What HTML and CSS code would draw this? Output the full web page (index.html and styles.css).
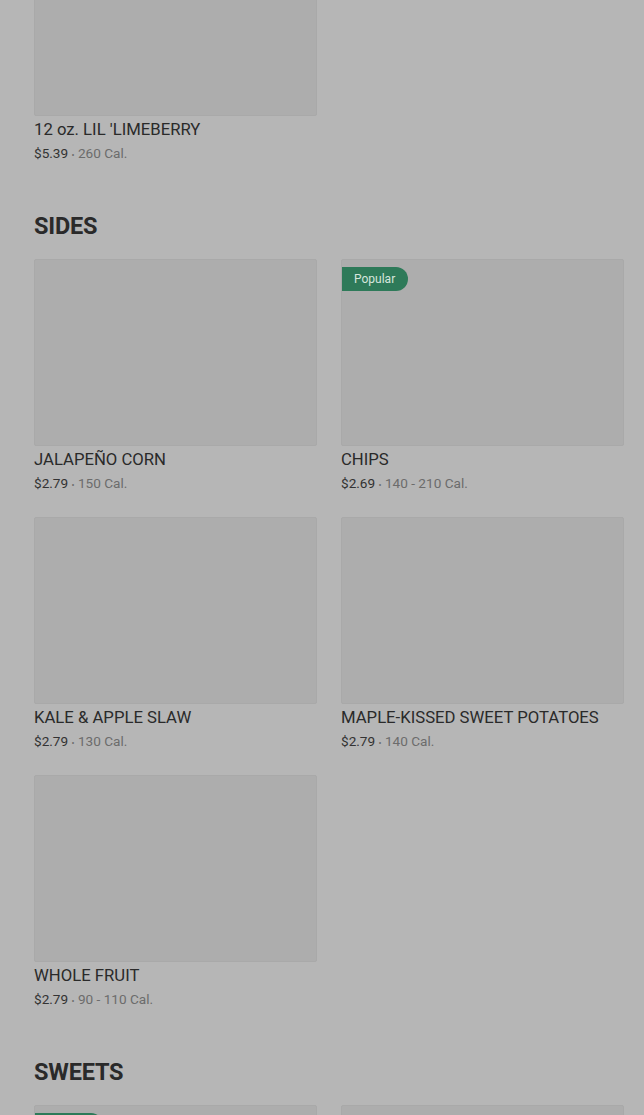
FILE: index.html
```html
<!DOCTYPE html>
<html lang="en">
<head>
<meta charset="UTF-8">
<meta name="viewport" content="width=device-width, initial-scale=1.0">
<title>Menu</title>
<link rel="stylesheet" href="styles.css">
</head>
<body>
<div class="menu">
  <section class="category">
    <div class="item-grid">
      <div class="item">
        <div class="item-photo"></div>
        <div class="item-name">12 oz. LIL 'LIMEBERRY</div>
        <div class="item-meta"><span class="price">$5.39</span> <span class="dot">•</span> 260 Cal.</div>
      </div>
    </div>
  </section>

  <section class="category">
    <h2>SIDES</h2>
    <div class="item-grid">
      <div class="item">
        <div class="item-photo"></div>
        <div class="item-name">JALAPEÑO CORN</div>
        <div class="item-meta"><span class="price">$2.79</span> <span class="dot">•</span> 150 Cal.</div>
      </div>
      <div class="item">
        <div class="item-photo"><span class="badge">Popular</span></div>
        <div class="item-name">CHIPS</div>
        <div class="item-meta"><span class="price">$2.69</span> <span class="dot">•</span> 140 - 210 Cal.</div>
      </div>
      <div class="item">
        <div class="item-photo"></div>
        <div class="item-name">KALE &amp; APPLE SLAW</div>
        <div class="item-meta"><span class="price">$2.79</span> <span class="dot">•</span> 130 Cal.</div>
      </div>
      <div class="item">
        <div class="item-photo"></div>
        <div class="item-name">MAPLE-KISSED SWEET POTATOES</div>
        <div class="item-meta"><span class="price">$2.79</span> <span class="dot">•</span> 140 Cal.</div>
      </div>
      <div class="item">
        <div class="item-photo"></div>
        <div class="item-name">WHOLE FRUIT</div>
        <div class="item-meta"><span class="price">$2.79</span> <span class="dot">•</span> 90 - 110 Cal.</div>
      </div>
    </div>
  </section>

  <section class="category">
    <h2>SWEETS</h2>
    <div class="item-grid">
      <div class="item">
        <div class="item-photo"><span class="badge badge-empty"></span></div>
      </div>
      <div class="item">
        <div class="item-photo"></div>
      </div>
    </div>
  </section>
</div>
</body>
</html>
```

FILE: styles.css
```css
body {
  font-family: Roboto, 'Liberation Sans', sans-serif;
  background: #b6b6b6;
  color: #2b2b2b;
  margin: 0;
  overflow: hidden;
}

/* page is scrolled, first photo is cut off at the top */
.menu {
  padding: 0 20px 0 34px;
  margin-top: -71px;
}

.category {
  margin-bottom: 49px;
}

.category h2 {
  font-size: 23.5px;
  font-weight: 700;
  line-height: 30px;
  height: 30px;
  letter-spacing: -0.2px;
  color: #2a2a2a;
  margin: 0 0 18px;
}

.item-grid {
  display: grid;
  grid-template-columns: 1fr 1fr;
  column-gap: 24px;
  row-gap: 25px;
}

.item-photo {
  position: relative;
  height: 187px;
  background: #adadad;
  border: 1px solid #a9a9a9;
  box-sizing: border-box;
  border-radius: 2px;
}

.badge {
  position: absolute;
  top: 7px;
  left: 0;
  height: 24px;
  line-height: 24px;
  padding: 0 13px 0 12px;
  background: #2e7a59;
  color: #d6e6dd;
  font-size: 12px;
  border-radius: 0 12px 12px 0;
}

.badge-empty {
  width: 43px;
}

.item-name {
  font-size: 16.7px;
  line-height: 20px;
  height: 20px;
  margin-top: 4px;
  color: #2a2a2a;
}

.item-meta {
  font-size: 13.6px;
  line-height: 18px;
  height: 18px;
  margin-top: 4px;
  color: #6c6c6c;
}

.item-meta .price {
  color: #333;
}

.item-meta .dot {
  font-size: 9px;
  line-height: 1;
}
```
